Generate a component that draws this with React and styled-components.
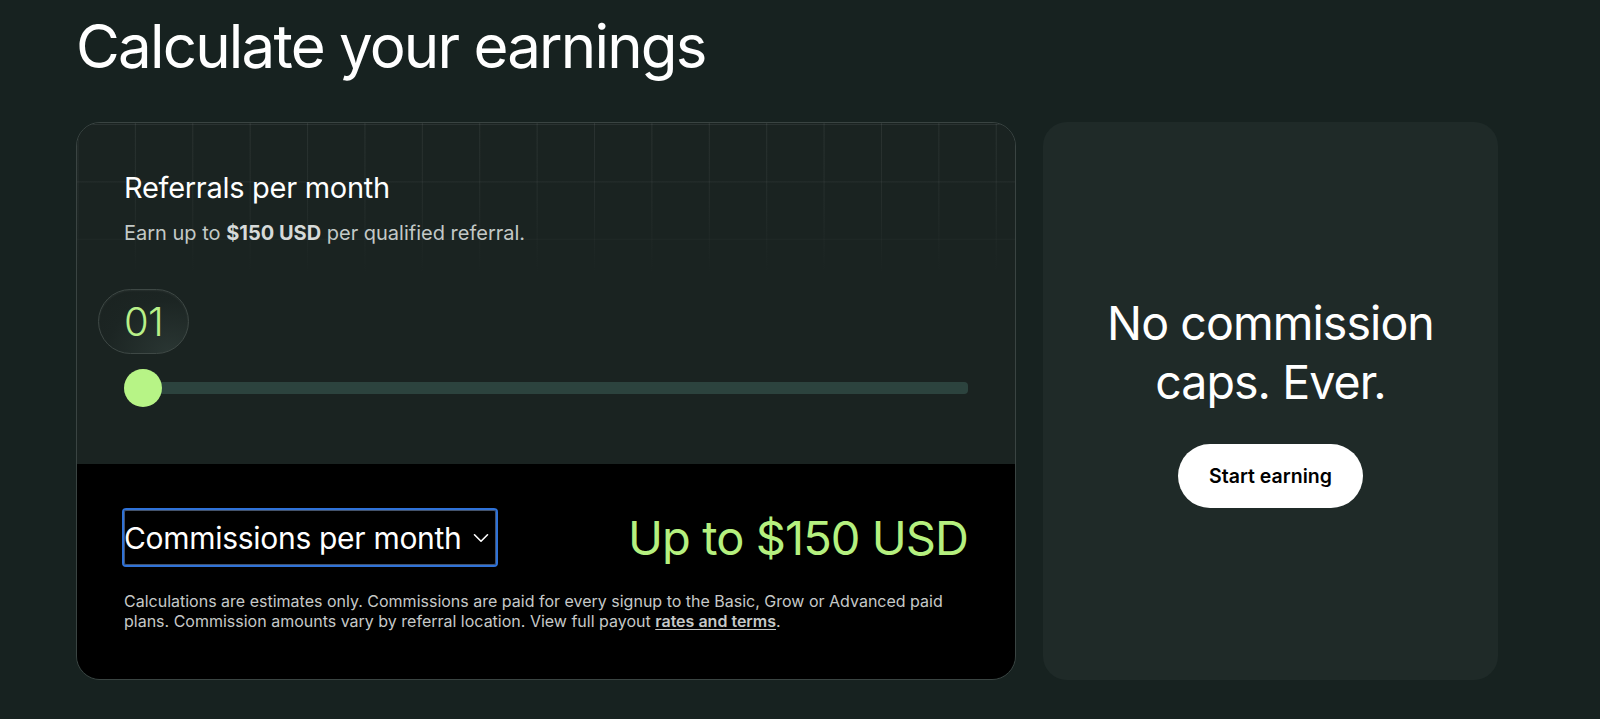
import React, { useState } from "react";
import styled, { createGlobalStyle } from "styled-components";
import { ChevronDown } from "lucide-react";

const GlobalStyle = createGlobalStyle`
  html, body {
    margin: 0;
    background: #172220;
  }
  body {
    font-family: Inter, "Noto Sans", sans-serif;
    color: #ffffff;
    -webkit-font-smoothing: antialiased;
  }
`;

const App = () => {
  const [referrals, setReferrals] = useState(1);
  const max = 50;
  const fill = ((referrals - 1) / (max - 1)) * 100;

  return (
    <>
      <GlobalStyle />
      <Page>
        <Title>Calculate your earnings</Title>
        <Cards>
          <Calculator>
            <InputArea>
              <Heading>Referrals per month</Heading>
              <Lead>
                Earn up to <strong>$150 USD</strong> per qualified referral.
              </Lead>
              <ValueBubble>{String(referrals).padStart(2, "0")}</ValueBubble>
              <Range
                type="range"
                min={1}
                max={max}
                value={referrals}
                onChange={(e) => setReferrals(Number(e.target.value))}
                style={{
                  background: `linear-gradient(to right, #b7f486 ${fill}%, #2c433e ${fill}%)`,
                }}
              />
            </InputArea>
            <ResultArea>
              <ResultRow>
                <PeriodSelect>
                  Commissions per month
                  <ChevronDown size={26} strokeWidth={1.5} />
                </PeriodSelect>
                <Amount>Up to ${(150 * referrals).toLocaleString("en-US")} USD</Amount>
              </ResultRow>
              <Disclaimer>
                Calculations are estimates only. Commissions are paid for every
                signup to the Basic, Grow or Advanced paid plans. Commission
                amounts vary by referral location. View full payout{" "}
                <TermsLink href="#">rates and terms</TermsLink>.
              </Disclaimer>
            </ResultArea>
          </Calculator>
          <Promo>
            <PromoTitle>
              No commission
              <br />
              caps. Ever.
            </PromoTitle>
            <CtaButton>Start earning</CtaButton>
          </Promo>
        </Cards>
      </Page>
    </>
  );
};

export default App;

const Page = styled.main`
  padding: 8px 0 0 76px;
  min-height: 719px;
  box-sizing: border-box;
`;

const Title = styled.h1`
  margin: 0;
  font-size: 60px;
  font-weight: 400;
  letter-spacing: -0.03em;
  line-height: 76px;
  color: #ffffff;
`;

const Cards = styled.div`
  display: flex;
  gap: 27px;
  margin-top: 38px;
`;

const Calculator = styled.section`
  width: 940px;
  height: 558px;
  box-sizing: border-box;
  border: 1px solid #3a4442;
  border-radius: 24px;
  overflow: hidden;
  display: flex;
  flex-direction: column;
`;

const InputArea = styled.div`
  height: 341px;
  box-sizing: border-box;
  padding: 46px 47px 0;
  display: flex;
  flex-direction: column;
  background-color: #1a2321;
  background-image: linear-gradient(
      to bottom,
      rgba(26, 35, 33, 0) 0px,
      rgba(26, 35, 33, 0.35) 80px,
      #1a2321 150px
    ),
    linear-gradient(to right, rgba(255, 255, 255, 0.07) 1px, transparent 1px),
    linear-gradient(to bottom, rgba(255, 255, 255, 0.07) 1px, transparent 1px);
  background-size: 100% 100%, 57.4px 57.4px, 57.4px 57.4px;
  background-position: 0 0, 0.5px 0, 0 1px;
`;

const Heading = styled.h2`
  margin: 0;
  font-size: 29px;
  font-weight: 400;
  line-height: 38px;
  letter-spacing: -0.01em;
  color: #ffffff;
`;

const Lead = styled.p`
  margin: 12px 0 0;
  font-size: 20px;
  line-height: 28px;
  color: #c3c9c7;

  strong {
    font-weight: 700;
    color: #d6dad9;
  }
`;

const ValueBubble = styled.div`
  margin: 42px 0 0 -26px;
  width: 91px;
  height: 65px;
  box-sizing: border-box;
  border-radius: 33px;
  border: 1px solid #3e4845;
  background: radial-gradient(
    120% 140% at 80% 100%,
    #2a3633 0%,
    #1c2523 60%,
    #1a2220 100%
  );
  box-shadow: inset 0 1px 2px rgba(255, 255, 255, 0.06);
  display: flex;
  align-items: center;
  justify-content: center;
  font-size: 40px;
  font-weight: 300;
  color: #b9f089;
  letter-spacing: -0.02em;
`;

const Range = styled.input`
  -webkit-appearance: none;
  appearance: none;
  margin: 28px 0 0;
  width: 100%;
  height: 12px;
  border-radius: 4px;
  outline: none;

  &::-webkit-slider-thumb {
    -webkit-appearance: none;
    width: 38px;
    height: 38px;
    border-radius: 50%;
    background: #b7f486;
    border: none;
    cursor: pointer;
  }
`;

const ResultArea = styled.div`
  flex: 1;
  background: #000000;
  padding: 44px 47px 0;
  display: flex;
  flex-direction: column;
`;

const ResultRow = styled.div`
  display: flex;
  align-items: center;
  justify-content: space-between;
`;

const PeriodSelect = styled.button`
  display: flex;
  align-items: center;
  gap: 6px;
  height: 59px;
  padding: 0 2px 0 0;
  margin-left: -2px;
  background: #000000;
  border: 2px solid #2f72d8;
  border-radius: 4px;
  box-shadow: inset 0 0 0 1px rgba(150, 185, 240, 0.45);
  color: #ffffff;
  font-family: Inter, "Noto Sans", sans-serif;
  font-size: 30px;
  font-weight: 400;
  letter-spacing: -0.01em;
  cursor: pointer;
`;

const Amount = styled.div`
  font-size: 47px;
  font-weight: 400;
  letter-spacing: -0.02em;
  color: #b5f07f;
`;

const Disclaimer = styled.p`
  margin: 24px 0 0;
  font-size: 16px;
  line-height: 20px;
  color: #c6c9c8;
`;

const TermsLink = styled.a`
  color: #c6c9c8;
  font-weight: 600;
  text-decoration: underline;
  text-underline-offset: 2px;
`;

const Promo = styled.aside`
  width: 455px;
  height: 558px;
  border-radius: 24px;
  background: #1f2a28;
  display: flex;
  flex-direction: column;
  align-items: center;
  justify-content: center;
  gap: 32px;
`;

const PromoTitle = styled.h2`
  margin: 0;
  text-align: center;
  font-size: 46.5px;
  font-weight: 400;
  line-height: 59px;
  letter-spacing: -0.02em;
  color: #ffffff;
`;

const CtaButton = styled.button`
  padding: 0 31px;
  height: 64px;
  border: none;
  border-radius: 32px;
  background: #ffffff;
  color: #000000;
  font-family: Inter, "Noto Sans", sans-serif;
  font-size: 19.5px;
  font-weight: 600;
  cursor: pointer;
`;
